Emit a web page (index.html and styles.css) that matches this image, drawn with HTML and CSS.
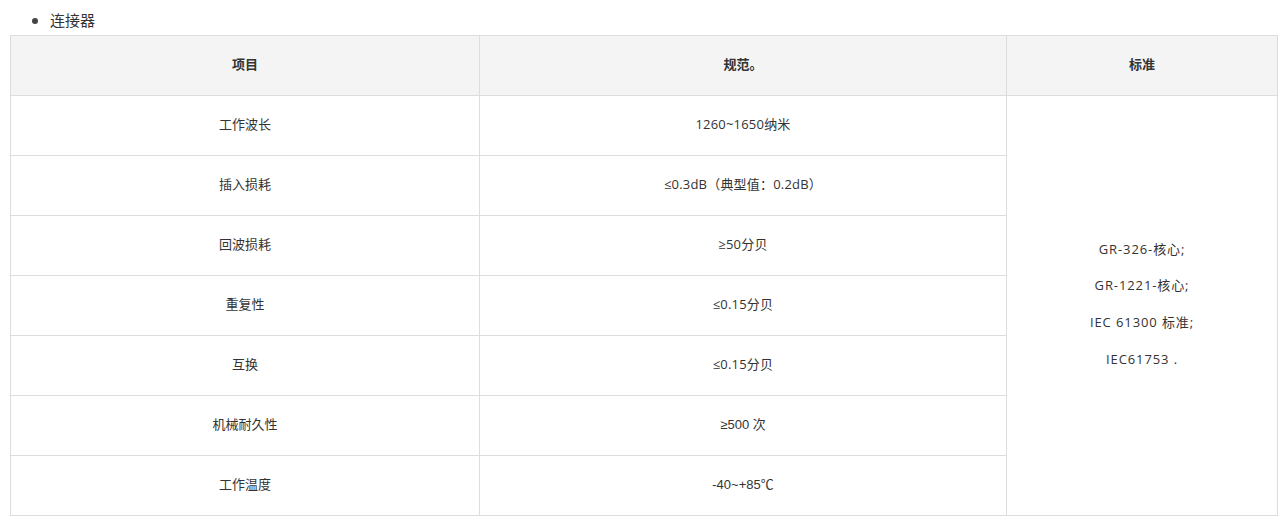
FILE: index.html
```html
<!DOCTYPE html>
<html lang="zh">
<head>
<meta charset="utf-8">
<title>连接器</title>
<link rel="stylesheet" href="styles.css">
</head>
<body>
<div class="page">
  <ul class="list">
    <li>连接器</li>
  </ul>
  <table class="spec">
    <colgroup>
      <col class="c1">
      <col class="c2">
      <col class="c3">
    </colgroup>
    <thead>
      <tr><th>项目</th><th>规范。</th><th>标准</th></tr>
    </thead>
    <tbody>
      <tr>
        <td>工作波长</td>
        <td class="pop">1260~1650纳米</td>
        <td rowspan="7" class="std">
          <p>GR-326-核心;</p>
          <p>GR-1221-核心;</p>
          <p>IEC 61300 标准;</p>
          <p>IEC61753 .</p>
        </td>
      </tr>
      <tr><td>插入损耗</td><td class="pop">≤0.3dB（典型值：0.2dB）</td></tr>
      <tr><td>回波损耗</td><td class="pop">≥50分贝</td></tr>
      <tr><td>重复性</td><td class="pop">≤0.15分贝</td></tr>
      <tr><td>互换</td><td class="pop">≤0.15分贝</td></tr>
      <tr><td>机械耐久性</td><td class="ari">≥500 次</td></tr>
      <tr><td>工作温度</td><td class="ari">-40~+85℃</td></tr>
    </tbody>
  </table>
</div>
</body>
</html>
```
FILE: styles.css
```css
html, body {
  margin: 0;
  padding: 0;
  background: #ffffff;
}
body {
  font-family: "Open Sans", "Noto Sans CJK SC", sans-serif;
  color: #333333;
}
.page {
  padding: 8px 5px 0 10px;
}
.list {
  margin: 0;
  padding: 0 0 0 40px;
  font-size: 15px;
  line-height: 24px;
  font-family: "Noto Sans CJK SC", sans-serif;
  color: #333;
}
.list li::marker {
  color: #444;
}
.spec {
  margin-top: 3px;
  width: 1267px;
  border-collapse: collapse;
  table-layout: fixed;
  font-size: 13px;
}
.c1 { width: 469px; }
.c2 { width: 527px; }
.c3 { width: 271px; }
.spec th,
.spec td {
  border: 1px solid #dddddd;
  text-align: center;
  vertical-align: middle;
  height: 60px;
  padding: 0 8px 5px;
  box-sizing: border-box;
  font-family: "Noto Sans CJK SC", sans-serif;
}
.spec th {
  background: #f4f4f4;
  font-weight: 700;
  color: #333;
}
.spec td.pop {
  font-family: "Open Sans", "Noto Sans CJK SC", sans-serif;
  letter-spacing: 0.2px;
}
.spec td.ari {
  font-family: "Liberation Sans", "Noto Sans CJK SC", sans-serif;
}
.spec td.std {
  font-family: "Open Sans", "Noto Sans CJK SC", sans-serif;
  letter-spacing: 0.9px;
  padding-bottom: 3px;
}
.std p {
  margin: 0;
  line-height: 36.7px;
}
```
